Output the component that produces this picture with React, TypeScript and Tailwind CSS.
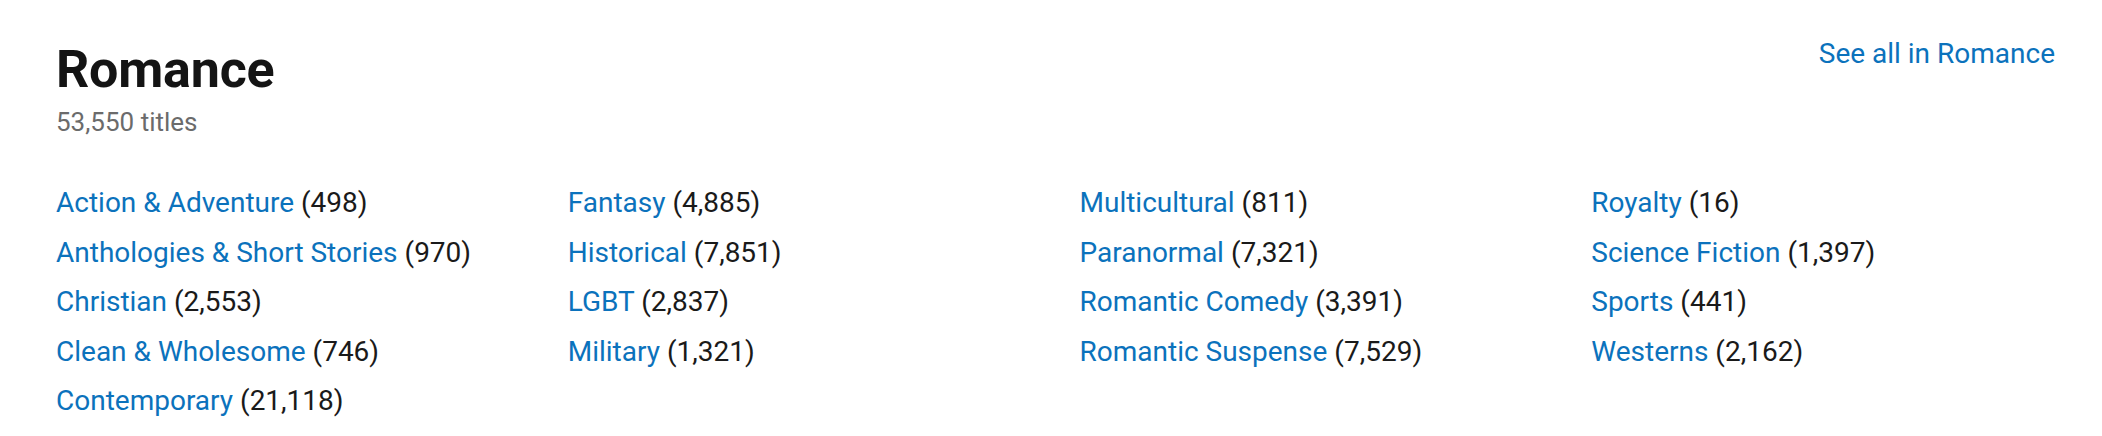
const columns: [string, string][][] = [
  [
    ["Action & Adventure", "498"],
    ["Anthologies & Short Stories", "970"],
    ["Christian", "2,553"],
    ["Clean & Wholesome", "746"],
    ["Contemporary", "21,118"],
  ],
  [
    ["Fantasy", "4,885"],
    ["Historical", "7,851"],
    ["LGBT", "2,837"],
    ["Military", "1,321"],
  ],
  [
    ["Multicultural", "811"],
    ["Paranormal", "7,321"],
    ["Romantic Comedy", "3,391"],
    ["Romantic Suspense", "7,529"],
  ],
  [
    ["Royalty", "16"],
    ["Science Fiction", "1,397"],
    ["Sports", "441"],
    ["Westerns", "2,162"],
  ],
];

export default function App() {
  return (
    <div className="min-h-screen bg-white pl-[56px] pr-[47px] pt-[39px] font-['Roboto','Liberation_Sans',sans-serif]">
      {/* header */}
      <div className="flex items-start justify-between">
        <div>
          <h1 className="text-[52px] leading-[61px] font-bold text-[#141414] tracking-[-0.2px]">
            Romance
          </h1>
          <p className="mt-[7px] text-[26px] leading-[30px] text-[#6b6b6b]">
            53,550 titles
          </p>
        </div>
        <a href="#" className="-mt-px text-[28px] leading-[32px] text-[#0b72bc]">
          See all in Romance
        </a>
      </div>

      {/* subcategories */}
      <div className="mt-[41px] grid grid-cols-4 gap-x-12">
        {columns.map((col, i) => (
          <ul key={i} className="flex flex-col">
            {col.map(([name, count]) => (
              <li key={name} className="text-[28px] leading-[49.5px] text-[#1a1a1a] whitespace-nowrap">
                <a href="#" className="text-[#0b72bc]">
                  {name}
                </a>{" "}
                ({count})
              </li>
            ))}
          </ul>
        ))}
      </div>
    </div>
  );
}
